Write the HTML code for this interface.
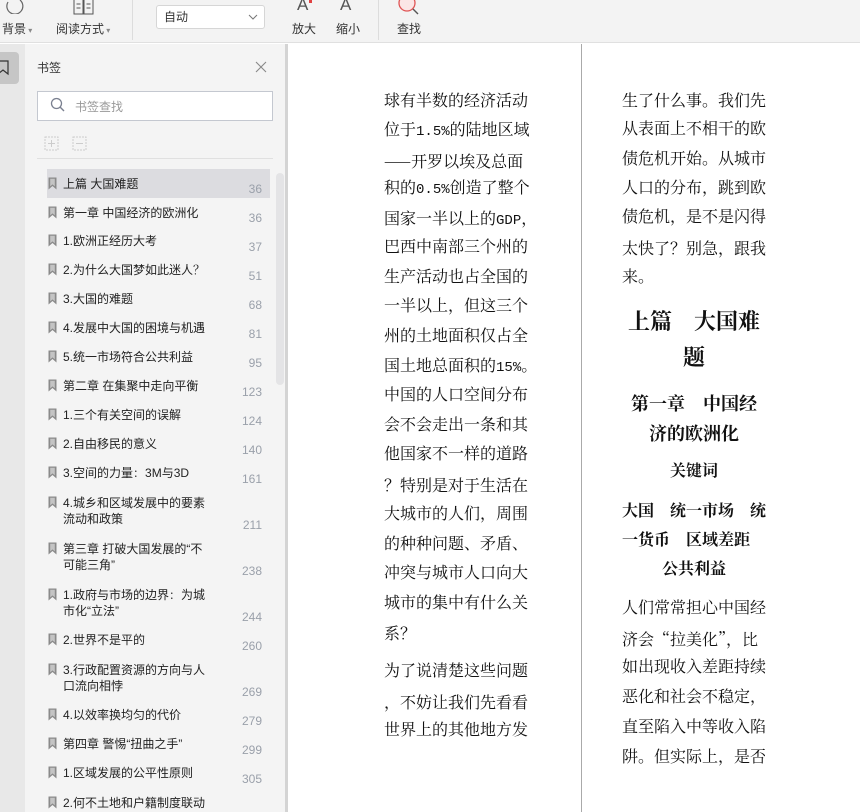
<!DOCTYPE html>
<html><head><meta charset="utf-8">
<style>
*{margin:0;padding:0;box-sizing:border-box}
body{width:860px;height:812px;overflow:hidden;background:#fff;position:relative;font-family:"Liberation Sans","Noto Sans CJK SC",sans-serif;}
.abs{position:absolute}
#tb{left:0;top:0;width:860px;height:43px;background:#f3f3f3;border-bottom:1px solid #e0e0e0}
.tl{position:absolute;top:21px;font-size:12px;color:#333;line-height:16px;white-space:nowrap}
.sep{position:absolute;top:0;width:1px;height:40px;background:#dcdcdc}
#strip{left:0;top:44px;width:25px;height:768px;background:#e8e8e8}
#side{left:25px;top:44px;width:260px;height:768px;background:#f4f4f4}
#bord{left:285px;top:44px;width:3px;height:768px;background:#d4d4d4}
.bi{position:absolute;left:63px;font-size:12px;color:#222;line-height:16px;white-space:nowrap}
.bk{position:absolute;left:48px;width:9px;height:13px}
.pn{position:absolute;left:230px;width:32px;text-align:right;font-size:12px;color:#9aa0aa;line-height:14px}
.t{position:absolute;font-family:"Liberation Serif","Noto Serif CJK SC",serif;font-size:16px;color:#111;line-height:20px;white-space:nowrap}
.c{position:absolute;font-family:"Liberation Serif","Noto Serif CJK SC",serif;color:#111;font-weight:bold;white-space:nowrap;text-align:center;width:170px;left:609px}
.j{font-family:"Noto Serif CJK SC",serif}
.m{font-family:"Liberation Mono",monospace;font-size:14px}
</style></head><body>
<div id="tb" class="abs">
  <svg class="abs" style="left:6px;top:0" width="24" height="14"><path d="M14 0 A8 8 0 1 1 2 2" fill="none" stroke="#666" stroke-width="1.2"/></svg>
  <div class="tl" style="left:2px">背景<span style="font-size:8px;color:#888"> ▾</span></div>
  <svg class="abs" style="left:73px;top:0" width="22" height="16"><rect x="1" y="-2" width="9" height="16" fill="none" stroke="#555"/><rect x="11" y="-2" width="9" height="16" fill="none" stroke="#555"/><path d="M3.5 4h4M3.5 8h4M13.5 4h4M13.5 8h4" stroke="#555"/></svg>
  <div class="tl" style="left:56px">阅读方式<span style="font-size:8px;color:#888"> ▾</span></div>
  <div class="sep" style="left:132px"></div>
  <div class="abs" style="left:156px;top:5px;width:109px;height:24px;border:1px solid #d6d6d6;border-radius:3px;background:#fff;font-size:12px;color:#333;line-height:22px;padding-left:7px">自动
    <svg class="abs" style="right:6px;top:8px" width="10" height="6"><path d="M1 1l4 4 4-4" fill="none" stroke="#777"/></svg></div>
  <div class="abs" style="left:297px;top:-5px;font-size:17px;color:#555;line-height:20px">A</div>
  <div class="abs" style="left:309px;top:0;width:3px;height:3px;background:#e04040"></div>
  <div class="abs" style="left:340px;top:-5px;font-size:17px;color:#555;line-height:20px">A</div>
  <div class="tl" style="left:292px">放大</div>
  <div class="tl" style="left:336px">缩小</div>
  <div class="sep" style="left:378px"></div>
  <svg class="abs" style="left:396px;top:0" width="26" height="18"><circle cx="11" cy="3" r="8" fill="#fbe6e6" stroke="#e05555" stroke-width="1.3"/><path d="M17 9l5 5" stroke="#555" stroke-width="1.4"/></svg>
  <div class="tl" style="left:397px">查找</div>
</div>
<div id="strip" class="abs"></div>
<div class="abs" style="left:0;top:52px;width:19px;height:32px;background:#c6c6c6;border-radius:0 4px 4px 0"></div>
<svg class="abs" style="left:0;top:60px" width="10" height="16"><path d="M-2 1h10v13l-5-4-5 4" fill="none" stroke="#333" stroke-width="1.2"/></svg>
<div id="side" class="abs"></div>
<div id="bord" class="abs"></div>
<div class="abs" style="left:37px;top:59px;font-size:12px;color:#333">书签</div>
<svg class="abs" style="left:255px;top:61px" width="12" height="12"><path d="M1 1l10 10M11 1L1 11" stroke="#888" stroke-width="1.1"/></svg>
<div class="abs" style="left:37px;top:91px;width:236px;height:30px;background:#fff;border:1px solid #c4c8d0"></div>
<svg class="abs" style="left:50px;top:97px" width="16" height="16"><circle cx="6.5" cy="6.5" r="5" fill="none" stroke="#7a8090" stroke-width="1.3"/><path d="M10 10l4 4" stroke="#7a8090" stroke-width="1.4"/></svg>
<div class="abs" style="left:75px;top:98px;font-size:12px;color:#999">书签查找</div>
<svg class="abs" style="left:44px;top:136px" width="50" height="16"><rect x="1" y="1" width="13" height="13" fill="none" stroke="#ccc" stroke-dasharray="2 1"/><path d="M4 7.5h7M7.5 4v7" stroke="#ccc"/><rect x="29" y="1" width="13" height="13" fill="none" stroke="#ccc" stroke-dasharray="2 1"/><path d="M32 7.5h7" stroke="#ccc"/></svg>
<div class="abs" style="left:37px;top:158px;width:236px;height:1px;background:#e0e0e0"></div>
<div class="abs" style="left:47px;top:169px;width:223px;height:29px;background:#dcdce0"></div>
<div class="abs" style="left:276px;top:173px;width:8px;height:212px;background:#e4e4e6;border-radius:4px"></div>

<svg width="0" height="0" style="position:absolute"><defs><symbol id="bm" viewBox="0 0 9 13"><path d="M0.5 0.5h8v12l-4-3.5-4 3.5z" fill="#8a8a8a"/><path d="M2.2 1.8h4.6v7.6l-2.3-2-2.3 2z" fill="#c4c4c4"/></symbol></defs></svg>

<svg class="bk" style="top:177px"><use href="#bm"/></svg><div class="bi" style="top:176px">上篇 大国难题</div><div class="pn" style="top:182px">36</div>
<svg class="bk" style="top:206px"><use href="#bm"/></svg><div class="bi" style="top:205px">第一章 中国经济的欧洲化</div><div class="pn" style="top:211px">36</div>
<svg class="bk" style="top:234px"><use href="#bm"/></svg><div class="bi" style="top:233px">1.欧洲正经历大考</div><div class="pn" style="top:240px">37</div>
<svg class="bk" style="top:263px"><use href="#bm"/></svg><div class="bi" style="top:262px">2.为什么大国梦如此迷人<span class="j">？</span></div><div class="pn" style="top:269px">51</div>
<svg class="bk" style="top:292px"><use href="#bm"/></svg><div class="bi" style="top:291px">3.大国的难题</div><div class="pn" style="top:298px">68</div>
<svg class="bk" style="top:321px"><use href="#bm"/></svg><div class="bi" style="top:320px">4.发展中大国的困境与机遇</div><div class="pn" style="top:327px">81</div>
<svg class="bk" style="top:350px"><use href="#bm"/></svg><div class="bi" style="top:349px">5.统一市场符合公共利益</div><div class="pn" style="top:356px">95</div>
<svg class="bk" style="top:379px"><use href="#bm"/></svg><div class="bi" style="top:378px">第二章 在集聚中走向平衡</div><div class="pn" style="top:385px">123</div>
<svg class="bk" style="top:408px"><use href="#bm"/></svg><div class="bi" style="top:407px">1.三个有关空间的误解</div><div class="pn" style="top:414px">124</div>
<svg class="bk" style="top:437px"><use href="#bm"/></svg><div class="bi" style="top:436px">2.自由移民的意义</div><div class="pn" style="top:443px">140</div>
<svg class="bk" style="top:466px"><use href="#bm"/></svg><div class="bi" style="top:465px">3.空间的力量<span class="j">：</span>3M与3D</div><div class="pn" style="top:472px">161</div>
<svg class="bk" style="top:496px"><use href="#bm"/></svg><div class="bi" style="top:495px">4.城乡和区域发展中的要素<br>流动和政策</div><div class="pn" style="top:518px">211</div>
<svg class="bk" style="top:542px"><use href="#bm"/></svg><div class="bi" style="top:541px">第三章 打破大国发展的“不<br>可能三角”</div><div class="pn" style="top:564px">238</div>
<svg class="bk" style="top:588px"><use href="#bm"/></svg><div class="bi" style="top:587px">1.政府与市场的边界<span class="j">：</span>为城<br>市化“立法”</div><div class="pn" style="top:610px">244</div>
<svg class="bk" style="top:633px"><use href="#bm"/></svg><div class="bi" style="top:632px">2.世界不是平的</div><div class="pn" style="top:639px">260</div>
<svg class="bk" style="top:663px"><use href="#bm"/></svg><div class="bi" style="top:662px">3.行政配置资源的方向与人<br>口流向相悖</div><div class="pn" style="top:685px">269</div>
<svg class="bk" style="top:708px"><use href="#bm"/></svg><div class="bi" style="top:707px">4.以效率换均匀的代价</div><div class="pn" style="top:714px">279</div>
<svg class="bk" style="top:737px"><use href="#bm"/></svg><div class="bi" style="top:736px">第四章 警惕“扭曲之手”</div><div class="pn" style="top:743px">299</div>
<svg class="bk" style="top:766px"><use href="#bm"/></svg><div class="bi" style="top:765px">1.区域发展的公平性原则</div><div class="pn" style="top:772px">305</div>
<svg class="bk" style="top:796px"><use href="#bm"/></svg><div class="bi" style="top:795px">2.何不土地和户籍制度联动</div>

<div class="abs" style="left:581px;top:44px;width:1px;height:768px;background:#aaa"></div>

<div class="t" style="left:384px;top:92px">球有半数的经济活动</div>
<div class="t" style="left:384px;top:121px">位于<span class="m">1.5%</span>的陆地区域</div>
<div class="t" style="left:384px;top:151px"><span class="j">——</span>开罗以埃及总面</div>
<div class="t" style="left:384px;top:179px">积的<span class="m">0.5%</span>创造了整个</div>
<div class="t" style="left:384px;top:208px">国家一半以上的<span class="m">GDP</span><span class="j">，</span></div>
<div class="t" style="left:384px;top:238px">巴西中南部三个州的</div>
<div class="t" style="left:384px;top:268px">生产活动也占全国的</div>
<div class="t" style="left:384px;top:297px">一半以上，但这三个</div>
<div class="t" style="left:384px;top:327px">州的土地面积仅占全</div>
<div class="t" style="left:384px;top:357px">国土地总面积的<span class="m">15%</span>。</div>
<div class="t" style="left:384px;top:386px">中国的人口空间分布</div>
<div class="t" style="left:384px;top:416px">会不会走出一条和其</div>
<div class="t" style="left:384px;top:445px">他国家不一样的道路</div>
<div class="t" style="left:384px;top:475px"><span class="j">？</span>特别是对于生活在</div>
<div class="t" style="left:384px;top:505px">大城市的人们，周围</div>
<div class="t" style="left:384px;top:535px">的种种问题、矛盾、</div>
<div class="t" style="left:384px;top:564px">冲突与城市人口向大</div>
<div class="t" style="left:384px;top:594px">城市的集中有什么关</div>
<div class="t" style="left:384px;top:623px">系<span class="j">？</span></div>
<div class="t" style="left:384px;top:662px">为了说清楚这些问题</div>
<div class="t" style="left:384px;top:692px"><span class="j">，</span>不妨让我们先看看</div>
<div class="t" style="left:384px;top:721px">世界上的其他地方发</div>

<div class="t" style="left:622px;top:92px">生了什么事。我们先</div>
<div class="t" style="left:622px;top:120px">从表面上不相干的欧</div>
<div class="t" style="left:622px;top:150px">债危机开始。从城市</div>
<div class="t" style="left:622px;top:179px">人口的分布，跳到欧</div>
<div class="t" style="left:622px;top:208px">债危机，是不是闪得</div>
<div class="t" style="left:622px;top:238px">太快了<span class="j">？</span>别急，跟我</div>
<div class="t" style="left:622px;top:268px">来。</div>
<div class="c" style="top:308px;font-size:22px;line-height:28px">上篇　大国难</div>
<div class="c" style="top:344px;font-size:22px;line-height:28px">题</div>
<div class="c" style="top:392px;font-size:18px;line-height:24px">第一章　中国经</div>
<div class="c" style="top:422px;font-size:18px;line-height:24px">济的欧洲化</div>
<div class="c" style="top:462px;font-size:16px;line-height:20px">关键词</div>
<div class="t" style="left:622px;top:502px;font-weight:bold">大国　统一市场　统</div>
<div class="t" style="left:622px;top:531px;font-weight:bold">一货币　区域差距</div>
<div class="c" style="top:560px;font-size:16px;line-height:20px">公共利益</div>
<div class="t" style="left:622px;top:599px">人们常常担心中国经</div>
<div class="t" style="left:622px;top:629px">济会<span class="j">“拉美化”</span>，比</div>
<div class="t" style="left:622px;top:658px">如出现收入差距持续</div>
<div class="t" style="left:622px;top:688px">恶化和社会不稳定，</div>
<div class="t" style="left:622px;top:718px">直至陷入中等收入陷</div>
<div class="t" style="left:622px;top:748px">阱。但实际上，是否</div>
</body></html>
